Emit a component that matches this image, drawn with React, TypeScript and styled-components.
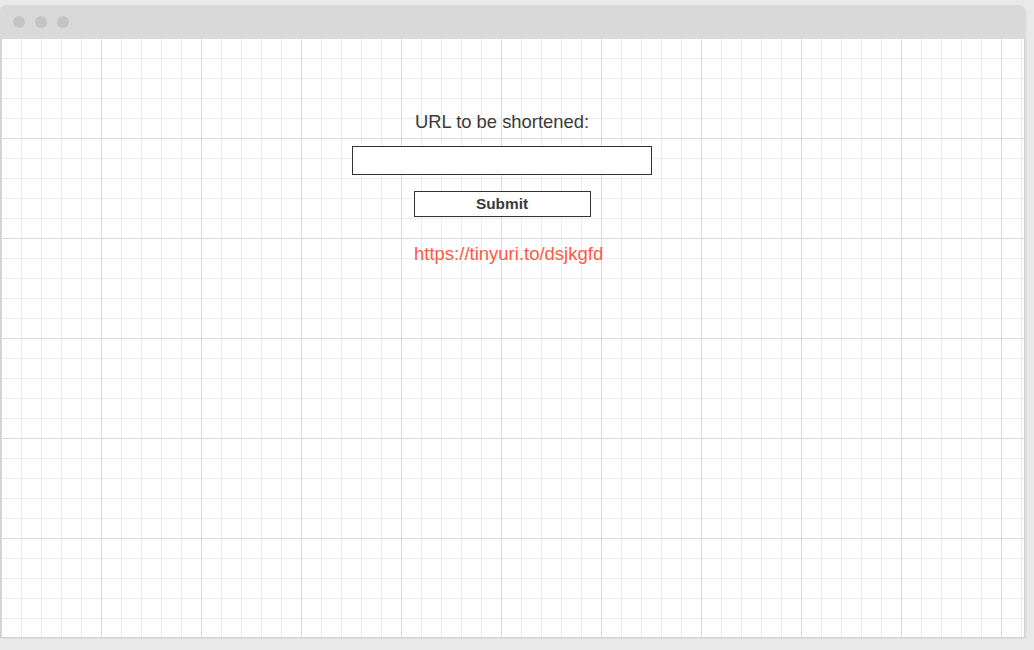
import React from "react";
import styled, { createGlobalStyle } from "styled-components";

const Global = createGlobalStyle`
  html, body { margin: 0; padding: 0; background: #e9e9e9; }
  body { font-family: "Liberation Sans", Arial, sans-serif; }
`;

const Page = styled.div`
  width: 1034px;
  height: 650px;
  padding-top: 5px;
  box-sizing: border-box;
  background: #e9e9e9;
`;

const Window = styled.div`
  width: 1025px;
  height: 633px;
  display: flex;
  flex-direction: column;
  box-shadow: 2px 1px 0 #e0e0e0;
  border-radius: 6px 6px 0 0;
`;

const TitleBar = styled.div`
  height: 33px;
  flex: none;
  background: #d9d9d9;
  border-radius: 6px 6px 0 0;
  display: flex;
  align-items: center;
  gap: 10px;
  padding-left: 13px;
`;

const Dot = styled.span`
  width: 12px;
  height: 12px;
  border-radius: 50%;
  background: #c4c4c4;
`;

const Canvas = styled.div`
  flex: 1;
  border: 1px solid #d2d2d2;
  border-top: none;
  background-color: #ffffff;
  background-image:
    linear-gradient(to right, #dadada 1px, transparent 1px),
    linear-gradient(to bottom, #dadada 1px, transparent 1px),
    linear-gradient(to right, #ececec 1px, transparent 1px),
    linear-gradient(to bottom, #ececec 1px, transparent 1px);
  background-size: 100px 100px, 100px 100px, 20px 20px, 20px 20px;
  padding-top: 73px;
  padding-left: 351px;
`;

const Form = styled.div`
  width: 300px;
  display: flex;
  flex-direction: column;
  align-items: center;
`;

const Label = styled.div`
  font-size: 18.4px;
  line-height: 21px;
  color: #3a3a3a;
`;

const UrlInput = styled.div`
  width: 300px;
  height: 29px;
  box-sizing: border-box;
  border: 1px solid #333333;
  background: #ffffff;
  margin-top: 14px;
`;

const Button = styled.div`
  width: 177px;
  height: 26px;
  box-sizing: border-box;
  border: 1px solid #333333;
  background: #ffffff;
  margin-top: 16px;
  display: flex;
  align-items: center;
  justify-content: center;
  font-size: 15.4px;
  font-weight: bold;
  color: #3a3a3a;
`;

const Result = styled.div`
  align-self: flex-start;
  margin-left: 62px;
  margin-top: 26px;
  font-size: 18.5px;
  line-height: 21px;
  color: #fd5a44;
`;

export default function App() {
  return (
    <Page>
      <Global />
      <Window>
        <TitleBar>
          <Dot />
          <Dot />
          <Dot />
        </TitleBar>
        <Canvas>
          <Form>
            <Label>URL to be shortened:</Label>
            <UrlInput />
            <Button>Submit</Button>
            <Result>https://tinyuri.to/dsjkgfd</Result>
          </Form>
        </Canvas>
      </Window>
    </Page>
  );
}
